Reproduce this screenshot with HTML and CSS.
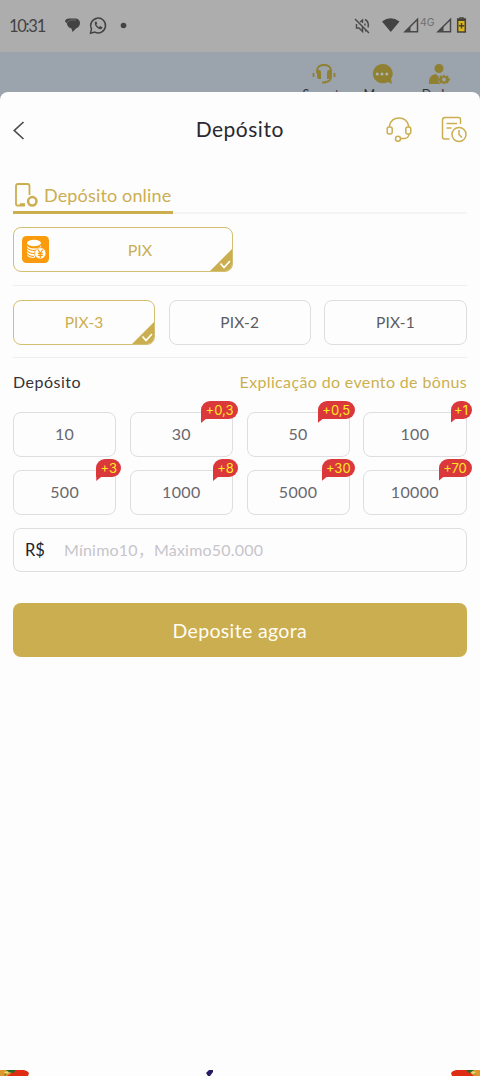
FILE: index.html
```html
<!DOCTYPE html>
<html lang="pt-BR">
<head>
<meta charset="utf-8">
<meta name="viewport" content="width=device-width, initial-scale=1">
<title>Depósito</title>
<link rel="stylesheet" href="styles.css">
</head>
<body>
<div class="screen">
  <header class="status">
    <span class="time">10:31</span>
    <svg class="status-left" width="66" height="20" viewBox="0 0 66 20" fill="none">
      <path d="M4 2.500h6c3 0 5 2 5 4.500 0 3-2 4.500-4 5.500l-3.500 3.500-1-3.500C3.500 12 2 9.500 2 7.500L0 5.500c0-2 2-3 4-3Z" fill="#434343"/>
      <path d="M2 7c1-2 3-3 5-3h4" stroke="#858585" stroke-width=".6"/>
      <path d="M25.500 17.300l1-4.500a7.400 7.400 0 1 1 3.300 3.300l-4.300 1.200Z" stroke="#434343" stroke-width="1.500"/>
      <path d="M30.500 5.500c-2 2 .5 5.500 2.700 7 2.300 1.300 4 .7 4.300-1.200l-2.300-1.200-1 1c-1.500-.6-2.300-1.500-2.800-2.700l.8-1-.8-2Z" fill="#434343"/>
      <circle cx="58.500" cy="9.500" r="2.800" fill="#434343"/>
    </svg>
    <svg class="status-right" width="114" height="20" viewBox="0 0 114 20" fill="none">
      <g stroke="#4c4c4c" stroke-width="1.500">
        <path d="M2 3l14 14M3.500 8v4H6l3.500 3.500v-5M7 6l2.500-2v3M12 7.500v2M12 3.500q4.500 2.500 3 8M12 15l1-.5"/>
      </g>
      <path d="M29 5.500q8.500-6.500 17.500 0l-8.700 10.500Z" fill="#434343"/>
      <path d="M64.500 3.300v12.400H52Z" stroke="#484848" stroke-width="1.500"/>
      <path d="M57.500 10v6H52Z" fill="#484848"/>
      <path d="M97.500 3.300v12.400H85Z" stroke="#484848" stroke-width="1.500"/>
      <path d="M90.500 10v6H85Z" fill="#484848"/>
      <text class="network" x="67" y="9.500">4G</text>
      <path d="M107 3h-2.300v13h7.600V3H110V2h-3Z" fill="#dcb51b" stroke="#454339" stroke-width="1.500"/>
      <path d="M104.500 3h8v2h-8Z" fill="#454339"/>
      <path d="M108.500 7v5.500m-2.700-2.700h5.400" stroke="#454339" stroke-width="1.400"/>
    </svg>
  </header>
  <nav class="topnav">
    <div class="nav-item">
      <svg width="24" height="22" viewBox="0 0 24 22" fill="none" stroke="#8f8131" stroke-width="1.800">
        <path d="M5 10V7q1-5 7-5t7 5v8q-1 4-6 4"/>
        <path d="M5 7h2q2 0 2 3v6H7q-2 0-2-2Zm14 0h-2q-2 0-2 3v6h2q2 0 2-2Z" fill="#8f8131" stroke="none"/>
        <path d="M1.500 10v4m21-4v4M10 19.500h4"/>
      </svg>
      <span>Suporte</span>
    </div>
    <div class="nav-item">
      <svg width="24" height="22" viewBox="0 0 24 22">
        <path d="M12 1a10 9.700 0 1 0 6 18l4 2-1-5A10 9.700 0 0 0 12 1Z" fill="#8f8131"/>
        <g fill="#adb3b6"><circle cx="7.200" cy="11" r="1.500"/><circle cx="12" cy="11" r="1.500"/><circle cx="16.800" cy="11" r="1.500"/></g>
      </svg>
      <span>Mensa</span>
    </div>
    <div class="nav-item">
      <svg width="24" height="22" viewBox="0 0 24 22">
        <circle cx="12" cy="5.500" r="4.500" fill="#8f8131"/>
        <path d="M2 21q-1-9 7-10l3 3 3-3q4 0 5 3v7Z" fill="#8f8131"/>
        <circle cx="17" cy="16.500" r="5.800" fill="#9ba3ad"/>
        <path d="M17 11.500l1.600 1.700 2.500-.6 .4 2.300 2 1.600-2 1.700-.3 2.300-2.500-.6L17 21.500l-1.700-1.600-2.500.6-.3-2.300-2-1.700 2-1.600.4-2.300 2.500.6Z" fill="#8f8131"/>
        <circle cx="17" cy="16.500" r="1.900" fill="#9ba3ad"/>
      </svg>
      <span>Dados</span>
    </div>
  </nav>

  <main class="sheet">
    <div class="sheet-head">
      <svg class="back" width="14" height="20" viewBox="0 0 14 20" fill="none" stroke="#4b4b4e" stroke-width="1.700"><path d="M10.500 2L1.300 10.500 10.500 19"/></svg>
      <h1 class="title">Depósito</h1>
      <div class="actions">
        <svg width="26" height="28" viewBox="0 0 26 28" fill="none" stroke="#cbae50" stroke-width="1.500">
          <path d="M3.500 11V9.500Q5.500 2 13 2t9.500 7.500V11M23 18q-.5 4-4 4.500h-5"/>
          <rect x="1.200" y="11" width="5" height="7" rx="2"/>
          <rect x="19.800" y="11" width="5" height="7" rx="2"/>
          <circle cx="12" cy="22.800" r="2.500"/>
        </svg>
        <svg width="26" height="28" viewBox="0 0 26 28" fill="none" stroke="#cbae50" stroke-width="1.500">
          <path d="M8.500 23H3.500q-2 0-2-2V4q0-2.500 2.500-2.500h13.500q2 0 2 2V8M5.500 7.500h10.500M5.500 12h5"/>
          <circle cx="18" cy="18.500" r="7"/>
          <path d="M18 14v4.500l3 3"/>
        </svg>
      </div>
    </div>

    <div class="tabs">
      <div class="tab">
        <svg width="25" height="26" viewBox="0 0 25 26" fill="none" stroke="#cbae50" stroke-width="1.800">
          <path d="M12 24.500H4.500q-1.500 0-1.500-1.500V5q0-2 2-2h9.500q2 0 2 2v9"/>
          <path d="M7 23.500h5" stroke-width="2.600"/>
          <circle cx="19.300" cy="20.300" r="4.200" stroke-width="2.500"/>
        </svg>
        <span class="tab-label">Depósito online</span>
      </div>
    </div>

    <div class="method selected">
      <svg class="coins" width="27" height="27" viewBox="0 0 27 27" fill="none">
        <rect width="27" height="27" rx="4.500" fill="#f99b0c"/>
        <ellipse cx="12" cy="7" rx="7" ry="3.300" fill="#fff"/>
        <path d="M5 9.500q2 3 7 3t7-3v5L12 22q-6 0-7-3Z" fill="#fff"/>
        <path d="M5 11.500q2 3 7 3t7-3M5 14.500q2 3 7 3t7-3M5 17.500q2 3 7 3" stroke="#f99b0c" stroke-width="1.100"/>
        <circle cx="18.300" cy="17.300" r="5.700" fill="#fff" stroke="#f99b0c" stroke-width=".8"/>
        <path d="M15.800 13.500l2.500 3.500 2.500-3.500M18.300 17v5M15.800 17.300h5M15.800 19.300h5" stroke="#f99b0c" stroke-width="1.200"/>
      </svg>
      <span>PIX</span>
      <svg class="corner" width="24" height="24" viewBox="0 0 24 24"><path d="M24 0v24H0Z" fill="#cbae50"/><path d="M11.500 15.500l3.500 4 6-6.500" fill="none" stroke="#fff" stroke-width="1.700"/></svg>
    </div>

    <div class="channels">
      <div class="option selected"><span>PIX-3</span>
        <svg class="corner" width="24" height="24" viewBox="0 0 24 24"><path d="M24 0v24H0Z" fill="#cbae50"/><path d="M11.500 15.500l3.500 4 6-6.500" fill="none" stroke="#fff" stroke-width="1.700"/></svg>
      </div>
      <div class="option">PIX-2</div>
      <div class="option">PIX-1</div>
    </div>

    <div class="amount-head">
      <h2 class="subtitle">Depósito</h2>
      <span class="bonus-link">Explicação do evento de bônus</span>
    </div>

    <div class="amounts">
      <div class="amount">10</div>
      <div class="amount">30<span class="badge w37">+0,3</span></div>
      <div class="amount">50<span class="badge w37">+0,5</span></div>
      <div class="amount">100<span class="badge w21">+1</span></div>
      <div class="amount">500<span class="badge w25">+3</span></div>
      <div class="amount">1000<span class="badge w25">+8</span></div>
      <div class="amount">5000<span class="badge w33">+30</span></div>
      <div class="amount">10000<span class="badge w33">+70</span></div>
    </div>

    <div class="field">
      <span class="currency">R$</span>
      <span class="hint">Mínimo10<span class="comma">，</span>Máximo50.000</span>
    </div>

    <div class="submit">Deposite agora</div>

    <footer class="edge">
      <svg width="29" height="6" viewBox="0 0 29 6"><path d="M0 0h24q4 1 5 3l-1 3H0Z" fill="#df2c15"/><path d="M0 0h16L7 6H0Z" fill="#dc982c"/><path d="M7 0h9l-3 3-4-1-5 4 2-4Z" fill="#26662b"/><path d="M4 2l4-1 1 2-3 1Z" fill="#eddb72"/></svg>
      <svg class="edge-mark" width="8" height="6" viewBox="0 0 8 6"><path d="M0 3L3 0h4v2L4 6H2Z" fill="#251c62"/></svg>
      <svg width="29" height="6" viewBox="0 0 29 6"><path d="M29 0H5Q1 1 0 3l1 3h28Z" fill="#df2c15"/><path d="M29 0H16l7 6h6Z" fill="#dc982c"/><path d="M22 0h-7l3 3 4-1 3 4-2-4Z" fill="#26662b"/><path d="M25 2l-4-1-1 2 3 1Z" fill="#eddb72"/></svg>
    </footer>
  </main>
</div>
</body>
</html>
```
FILE: styles.css
```css
* { box-sizing: border-box; }
body { margin: 0; font-family: Lato, "Noto Sans", sans-serif; background: #9ba3ad; }
svg { display: block; flex: none; }
.screen { width: 480px; height: 1076px; overflow: hidden; display: flex; flex-direction: column; }

.status { height: 52px; flex: none; display: flex; align-items: center; padding: 0 13px 0 9px; background: #adadad; color: #434343; }
.time { width: 56px; font-size: 16.500px; letter-spacing: -1.300px; }
.status-right { margin-left: auto; }
.network { font: 10.500px Inter, sans-serif; fill: #707070; }

.topnav { height: 40px; flex: none; display: flex; justify-content: flex-end; padding: 11px 12px 0 0; }
.nav-item { width: 57.500px; display: flex; flex-direction: column; align-items: center; gap: 1.500px; font-size: 12.500px; line-height: 16px; color: #303137; }

.sheet { position: relative; flex: 1; display: flex; flex-direction: column; padding: 0 13.500px 0 13px; background: #fefdfe; border-radius: 8px 8px 0 0; }
.sheet-head { height: 74px; display: grid; grid-template-columns: 80px 1fr 80px; align-items: center; }
.back { margin-top: 2px; }
.title { margin: 0; font-size: 21px; font-weight: 400; line-height: 26px; color: #29292e; text-align: center; letter-spacing: .5px; }
.actions { display: flex; justify-content: flex-end; gap: 29px; padding-top: 1px; }

.tabs { height: 48px; display: flex; align-items: flex-end; border-bottom: 2px solid #f4f3f6; }
.tab { width: 160px; height: 33px; margin-bottom: -2px; display: flex; align-items: flex-start; gap: 6px; border-bottom: 3px solid #cbae50; color: #cbae50; }
.tab-label { font-size: 18px; line-height: 28px; white-space: nowrap; letter-spacing: .15px; }

.method, .option, .amount, .field { border: 1px solid #dddde2; border-radius: 8px; }
.method, .option, .amount { position: relative; height: 45px; display: flex; align-items: center; justify-content: center; padding-bottom: 2px; }
.method { width: 220px; margin-top: 13px; padding: 0 8px; font-size: 16px; }
.method span { flex: 1; text-align: center; margin-right: -7px; }
.selected { border: 1.500px solid #d2bf70; color: #cbae50; overflow: hidden; }
.corner { position: absolute; right: -1px; bottom: -1px; }

.channels { display: grid; grid-template-columns: repeat(3, 1fr); gap: 13.500px; margin-top: 13px; padding: 14px 0 12px; border-top: 1px solid #eeedf0; border-bottom: 1px solid #eeedf0; }
.option { font-size: 15.500px; letter-spacing: .15px; color: #5c5c61; }
.option.selected { color: #cbae50; }

.amount-head { height: 54px; display: flex; justify-content: space-between; padding-top: 12px; line-height: 24px; }
.subtitle { margin: 0; font-size: 16px; font-weight: 400; letter-spacing: .5px; color: #333338; }
.bonus-link { font-size: 16px; letter-spacing: .36px; margin-right: -.5px; color: #cbb04f; }

.amounts { display: grid; grid-template-columns: repeat(4, 1fr); gap: 13px 13.500px; }
.amount { font-size: 16px; letter-spacing: .35px; color: #68686d; }
.badge { position: absolute; right: -6px; top: -12px; height: 18px; border-radius: 9px 9px 9px 0; background: #db383c; color: #ffe824; font: 400 13px/18px Inter, sans-serif; letter-spacing: 0; text-align: center; }
.badge::after { content: ""; position: absolute; left: 0; bottom: -4px; width: 6px; height: 5px; background: #db383c; clip-path: polygon(0 0, 100% 0, 0 100%); }
.w37 { width: 37px; } .w33 { width: 33px; } .w25 { width: 25px; } .w21 { width: 21px; }

.field { height: 44px; margin-top: 13px; display: flex; align-items: center; padding-left: 11px; }
.currency { width: 39px; font-size: 16.500px; color: #222226; }
.hint { font-size: 16px; letter-spacing: .2px; color: #c6c5ca; white-space: nowrap; padding-bottom: 1px; }
.comma { font-family: "Noto Sans CJK SC", sans-serif; line-height: 16px; }

.submit { height: 54px; margin-top: 31px; border-radius: 8px; background: #cbae50; color: #fffdf4; display: flex; align-items: center; justify-content: center; font-size: 19.500px; letter-spacing: .35px; }
.edge { height: 6px; margin: auto -13.500px 0 -13px; display: flex; justify-content: space-between; align-items: flex-start; }
.edge-mark { margin-right: 60px; }
```
